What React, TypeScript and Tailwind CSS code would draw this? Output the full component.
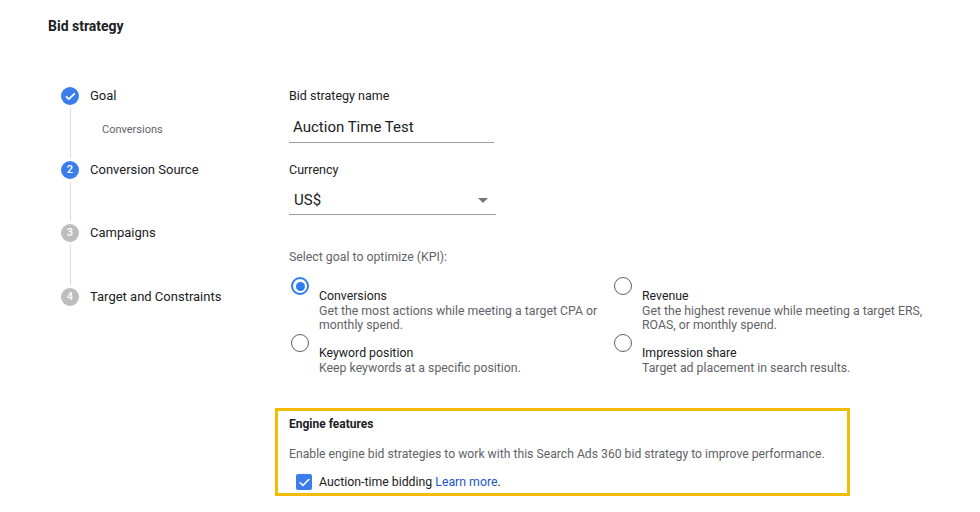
import React from "react";

const font = { fontFamily: "Roboto, 'Liberation Sans', Arial, sans-serif" };

function StepCircle({ n, active, done }: { n?: number; active?: boolean; done?: boolean }) {
  const bg = active || done ? "bg-[#3b7ded]" : "bg-[#bdbdbd]";
  return (
    <div className={`w-[18px] h-[18px] rounded-full ${bg} flex items-center justify-center text-white text-[11px] font-medium shrink-0`}>
      {done ? (
        <svg width="13" height="13" viewBox="0 0 24 24" fill="none">
          <path d="M4.5 12.5l4.5 4.5 10-10" stroke="white" strokeWidth="3.2" strokeLinecap="round" strokeLinejoin="round" />
        </svg>
      ) : (
        n
      )}
    </div>
  );
}

function Connector({ h, children }: { h: number; children?: React.ReactNode }) {
  return (
    <div className="flex" style={{ height: h }}>
      <div className="w-[18px] flex justify-center py-[2px] shrink-0">
        <div className="w-px bg-[#dadce0] h-full" />
      </div>
      {children}
    </div>
  );
}

function Radio({ checked }: { checked?: boolean }) {
  return checked ? (
    <div className="w-[18px] h-[18px] rounded-full border-2 border-[#2f7cf0] flex items-center justify-center shrink-0">
      <div className="w-[9px] h-[9px] rounded-full bg-[#2f7cf0]" />
    </div>
  ) : (
    <div className="w-[18px] h-[18px] rounded-full border-[1.5px] border-[#616161] shrink-0" />
  );
}

function Option({ checked, title, lines }: { checked?: boolean; title: string; lines: string[] }) {
  return (
    <div className="flex items-start pl-[2px]">
      <Radio checked={checked} />
      <div className="ml-[10px] mt-[12px]">
        <div className="text-[12.3px] leading-[15px] text-[#202124]">{title}</div>
        {lines.map((l) => (
          <div key={l} className="text-[12.3px] leading-[14px] text-[#5f6368] whitespace-nowrap">{l}</div>
        ))}
      </div>
    </div>
  );
}

export default function App() {
  return (
    <div className="w-[980px] h-[512px] bg-white overflow-hidden relative" style={font}>
      <div className="pl-[48px] pt-[16px] h-[86px]">
        <div className="text-[14px] font-bold text-[#202124] leading-5">Bid strategy</div>
      </div>
      <div className="flex pl-[61px]">
        {/* Stepper */}
        <div className="w-[228px] shrink-0 text-[13px] text-[#202124]">
          <div className="flex items-center h-5">
            <StepCircle done />
            <span className="ml-[11px]">Goal</span>
          </div>
          <Connector h={54}>
            <div className="ml-[23px] mt-[16px] text-[11px] text-[#5f6368] leading-4">Conversions</div>
          </Connector>
          <div className="flex items-center h-5">
            <StepCircle n={2} active />
            <span className="ml-[11px]">Conversion Source</span>
          </div>
          <Connector h={43} />
          <div className="flex items-center h-5">
            <StepCircle n={3} />
            <span className="ml-[11px]">Campaigns</span>
          </div>
          <Connector h={44} />
          <div className="flex items-center h-5">
            <StepCircle n={4} />
            <span className="ml-[11px]">Target and Constraints</span>
          </div>
        </div>

        {/* Form */}
        <div className="flex-1">
          <div className="h-5 leading-5 text-[12.5px] text-[#202124]">Bid strategy name</div>
          <div className="mt-[11px] w-[205px] border-b border-[#9e9e9e] pb-[5px] pl-1 text-[15px] leading-5 text-[#202124]">
            Auction Time Test
          </div>
          <div className="mt-[17px] h-5 leading-5 text-[12.5px] text-[#202124]">Currency</div>
          <div className="mt-[10px] w-[207px] border-b border-[#9e9e9e] pb-[4px] pl-[5px] pr-[8px] text-[15px] leading-5 text-[#202124] flex items-center justify-between">
            <span>US$</span>
            <svg width="10" height="5" viewBox="0 0 10 5">
              <path d="M0 0h10L5 5z" fill="#757575" />
            </svg>
          </div>
          <div className="mt-[32px] h-5 leading-5 text-[12.3px] text-[#5f6368]">Select goal to optimize (KPI):</div>
          <div className="mt-[10px] grid grid-cols-[323px_1fr] gap-y-[2px]">
            <Option checked title="Conversions" lines={["Get the most actions while meeting a target CPA or", "monthly spend."]} />
            <Option title="Revenue" lines={["Get the highest revenue while meeting a target ERS,", "ROAS, or monthly spend."]} />
            <Option title="Keyword position" lines={["Keep keywords at a specific position."]} />
            <Option title="Impression share" lines={["Target ad placement in search results."]} />
          </div>
        </div>
      </div>

      {/* Engine features */}
      <div className="absolute left-[275px] top-[408px] w-[575px] h-[88px] border-[3px] border-[#f4bc00] pl-[11px]">
        <div className="mt-[5px] text-[12px] font-bold text-[#202124] leading-4">Engine features</div>
        <div className="mt-[14px] text-[12.2px] text-[#5f6368] leading-4">
          Enable engine bid strategies to work with this Search Ads 360 bid strategy to improve performance.
        </div>
        <div className="mt-[12px] flex items-center">
          <div className="ml-[7px] w-[16px] h-[16px] rounded-[2px] bg-[#3b7ded] flex items-center justify-center">
            <svg width="13" height="13" viewBox="0 0 24 24" fill="none">
              <path d="M4 12.5l5 5L20 6.5" stroke="white" strokeWidth="3" strokeLinecap="round" strokeLinejoin="round" />
            </svg>
          </div>
          <span className="ml-[7px] text-[12.3px] text-[#202124] leading-4">
            Auction-time bidding <span className="text-[#1a56c8]">Learn more</span>.
          </span>
        </div>
      </div>
    </div>
  );
}
